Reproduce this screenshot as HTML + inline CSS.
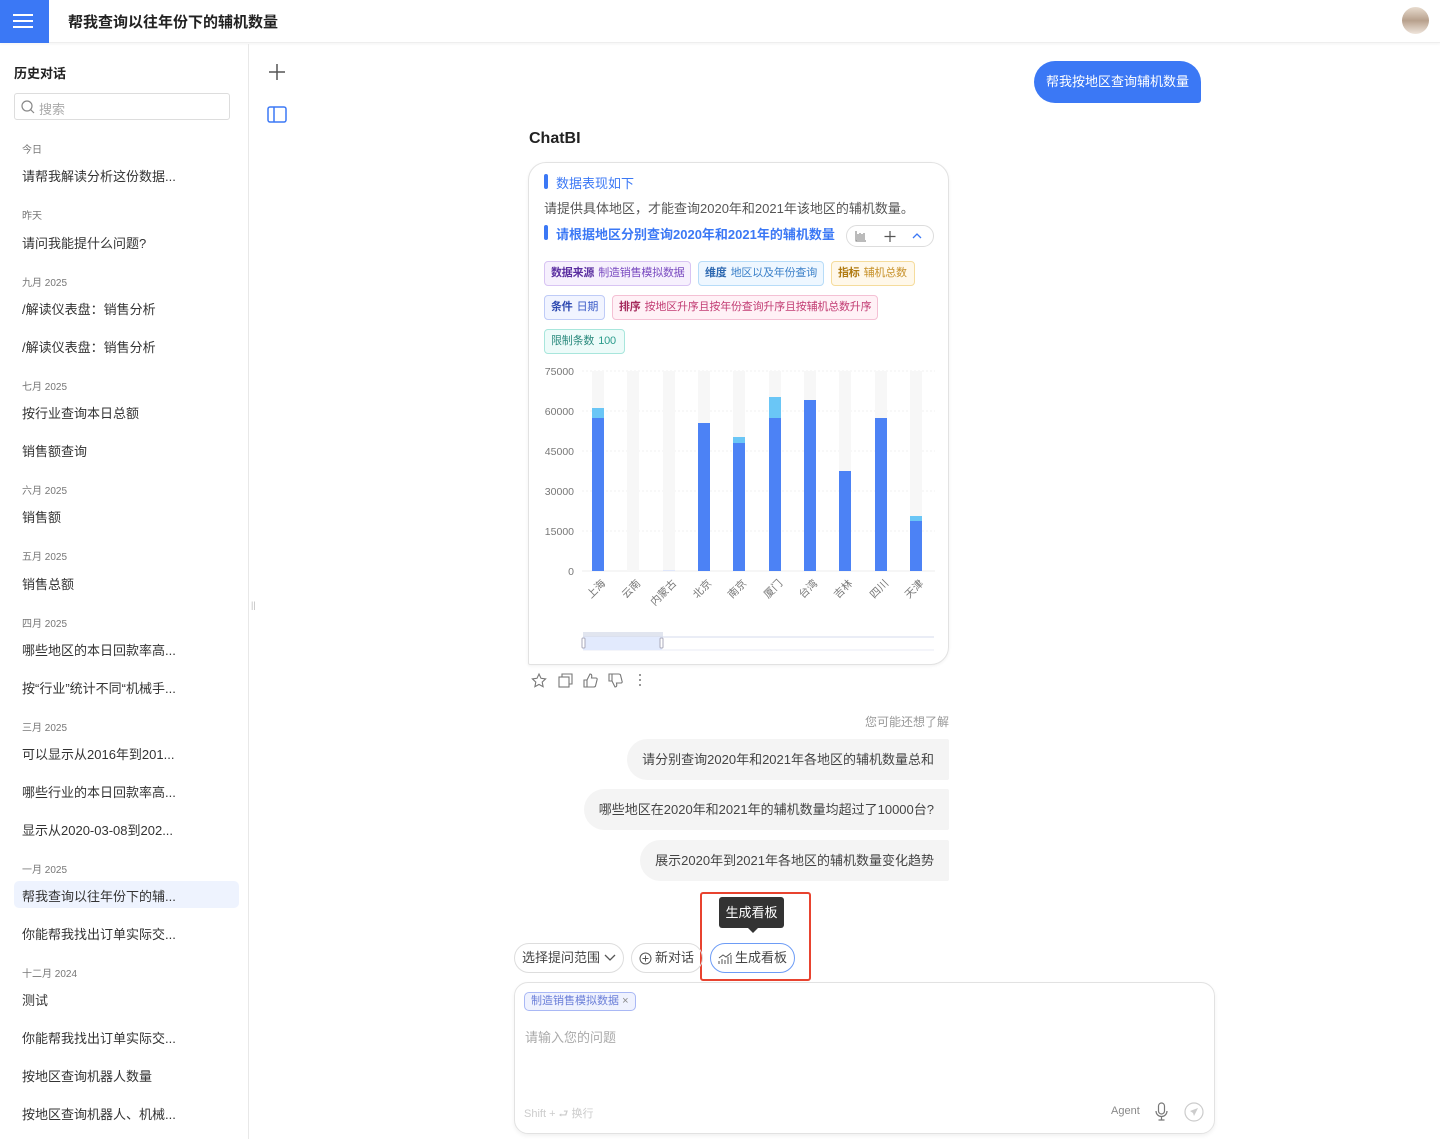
<!DOCTYPE html>
<html><head><meta charset="utf-8"><style>
*{box-sizing:border-box;margin:0;padding:0}
body{width:1440px;height:1139px;position:relative;overflow:hidden;background:#fff;font-family:"Liberation Sans","Noto Sans CJK SC",sans-serif;color:#333}
.a{position:absolute;white-space:nowrap}
.hdr{left:0;top:0;width:1440px;height:43px;border-bottom:1px solid #eee;box-shadow:0 1px 3px rgba(0,0,0,.05)}
.side{left:0;top:44px;width:249px;height:1095px;border-right:1px solid #e8e8e8}
.grp{font-size:10px;color:#777;left:22px}
.it{font-size:13px;color:#333;left:22px}
.tag{position:absolute;height:25px;border-radius:4px;font-size:11px;line-height:23px;padding:0 6px;border:1px solid;white-space:nowrap;letter-spacing:-0.2px}
.tag b{font-weight:600;margin-right:4px}
.sug{position:absolute;right:491px;height:41px;background:#f4f4f4;border-radius:21px 2px 2px 21px;font-size:13px;color:#444;line-height:41px;padding:0 15px;white-space:nowrap}
.btn{position:absolute;top:943px;height:30px;border:1px solid #ddd;border-radius:15px;font-size:13px;line-height:28px;color:#444;padding:0 7px;white-space:nowrap;display:flex;align-items:center;gap:3px}
</style></head><body>
<div class="a hdr"></div>
<div class="a" style="left:0;top:0;width:49px;height:43px;background:#3b78f5"></div>
<div class="a" style="left:13px;top:14px;width:20px;height:2px;background:#fff;box-shadow:0 6px 0 #fff,0 12px 0 #fff"></div>
<div class="a" style="left:68px;top:11px;font-size:15px;font-weight:600;color:#222">帮我查询以往年份下的辅机数量</div>
<div class="a" style="left:1402px;top:7px;width:27px;height:27px;border-radius:50%;background:linear-gradient(180deg,#e8dccf,#b7a08c 50%,#efe5dc)"></div>

<div class="a side"></div>
<div class="a" style="left:14px;top:63px;font-size:13px;font-weight:600;color:#222">历史对话</div>
<div class="a" style="left:14px;top:93px;width:216px;height:27px;border:1px solid #ddd;border-radius:3px"></div>
<svg class="a" style="left:21px;top:100px" width="14" height="14"><circle cx="6" cy="6" r="5" fill="none" stroke="#888" stroke-width="1.2"/><line x1="9.5" y1="9.5" x2="13" y2="13" stroke="#888" stroke-width="1.2"/></svg>
<div class="a" style="left:39px;top:99px;font-size:13px;color:#aaa">搜索</div>
<div class="a" style="left:14px;top:881px;width:225px;height:27px;background:#eef3fe;border-radius:5px"></div>
<div class="a grp" style="top:141px">今日</div>
<div class="a it" style="top:166px">请帮我解读分析这份数据...</div>
<div class="a grp" style="top:207px">昨天</div>
<div class="a it" style="top:233px">请问我能提什么问题?</div>
<div class="a grp" style="top:274px">九月 2025</div>
<div class="a it" style="top:299px">/解读仪表盘：销售分析</div>
<div class="a it" style="top:337px">/解读仪表盘：销售分析</div>
<div class="a grp" style="top:378px">七月 2025</div>
<div class="a it" style="top:403px">按行业查询本日总额</div>
<div class="a it" style="top:441px">销售额查询</div>
<div class="a grp" style="top:482px">六月 2025</div>
<div class="a it" style="top:507px">销售额</div>
<div class="a grp" style="top:548px">五月 2025</div>
<div class="a it" style="top:574px">销售总额</div>
<div class="a grp" style="top:615px">四月 2025</div>
<div class="a it" style="top:640px">哪些地区的本日回款率高...</div>
<div class="a it" style="top:678px">按“行业”统计不同“机械手...</div>
<div class="a grp" style="top:719px">三月 2025</div>
<div class="a it" style="top:744px">可以显示从2016年到201...</div>
<div class="a it" style="top:782px">哪些行业的本日回款率高...</div>
<div class="a it" style="top:820px">显示从2020-03-08到202...</div>
<div class="a grp" style="top:861px">一月 2025</div>
<div class="a it" style="top:886px">帮我查询以往年份下的辅...</div>
<div class="a it" style="top:924px">你能帮我找出订单实际交...</div>
<div class="a grp" style="top:965px">十二月 2024</div>
<div class="a it" style="top:990px">测试</div>
<div class="a it" style="top:1028px">你能帮我找出订单实际交...</div>
<div class="a it" style="top:1066px">按地区查询机器人数量</div>
<div class="a it" style="top:1104px">按地区查询机器人、机械...</div>
<div class="a" style="left:251px;top:600px;font-size:9px;color:#bbb">||</div>

<svg class="a" style="left:268px;top:63px" width="18" height="18"><path d="M9 1v16M1 9h16" stroke="#555" stroke-width="1.5"/></svg>
<svg class="a" style="left:267px;top:106px" width="20" height="18"><rect x="1" y="1" width="18" height="15" rx="2" fill="none" stroke="#3b78f5" stroke-width="1.5"/><line x1="7" y1="1" x2="7" y2="16" stroke="#3b78f5" stroke-width="1.5"/></svg>

<div class="a" style="left:1034px;top:61px;width:167px;height:42px;background:#3b78f5;border-radius:21px 21px 3px 21px;color:#fff;font-size:13px;line-height:42px;text-align:center">帮我按地区查询辅机数量</div>

<div class="a" style="left:529px;top:130px;font-size:16px;font-weight:700;color:#222">ChatBI</div>
<div class="a" style="left:528px;top:162px;width:421px;height:503px;border:1px solid #e2e2e2;border-radius:18px 18px 18px 2px;box-shadow:0 1px 3px rgba(0,0,0,.06)"></div>
<div class="a" style="left:544px;top:174px;width:4px;height:15px;background:#3b78f5;border-radius:2px"></div>
<div class="a" style="left:556px;top:173px;font-size:13px;color:#3b78f5">数据表现如下</div>
<div class="a" style="left:544px;top:198px;font-size:13px;color:#555">请提供具体地区，才能查询2020年和2021年该地区的辅机数量。</div>
<div class="a" style="left:544px;top:225px;width:4px;height:15px;background:#3b78f5;border-radius:2px"></div>
<div class="a" style="left:556px;top:224px;font-size:13px;color:#3b78f5;font-weight:600">请根据地区分别查询2020年和2021年的辅机数量</div>
<div class="a" style="left:846px;top:225px;width:88px;height:22px;border:1px solid #ddd;border-radius:11px"></div>
<svg class="a" style="left:854px;top:230px" width="80" height="12"><path d="M2 1v10h10M4 4v6M6 3v7M8 4v6M10 3v7" stroke="#777" stroke-width="1" fill="none"/><path d="M36 1v11M30.5 6.5h11" stroke="#555" stroke-width="1.2"/><path d="M59 8l4-4 4 4" stroke="#3b78f5" stroke-width="1.3" fill="none"/></svg>

<div class="tag" style="left:544px;top:261px;width:147px;background:#f6f0fd;border-color:#d8c4f3;color:#7a4bc0"><b style="color:#5b2fa0">数据来源</b>制造销售模拟数据</div>
<div class="tag" style="left:698px;top:261px;width:126px;background:#eef7ff;border-color:#b7dcf8;color:#3b80c9"><b style="color:#2d68b0">维度</b>地区以及年份查询</div>
<div class="tag" style="left:831px;top:261px;width:84px;background:#fff8ea;border-color:#f5dc9c;color:#c7912a"><b style="color:#b07a10">指标</b>辅机总数</div>
<div class="tag" style="left:544px;top:295px;width:61px;background:#f1f4ff;border-color:#bfcbf7;color:#3c5cc8"><b style="color:#2c48b0">条件</b>日期</div>
<div class="tag" style="left:612px;top:295px;width:266px;background:#fff1f6;border-color:#f4c0d4;color:#c23c73"><b style="color:#a52a5c">排序</b>按地区升序且按年份查询升序且按辅机总数升序</div>
<div class="tag" style="left:544px;top:329px;width:81px;background:#edfbf9;border-color:#a8e6dc;color:#2b9c8c"><b style="color:#2b8a7d;font-weight:400">限制条数</b>100</div>

<svg class="a" style="left:530px;top:360px" width="410" height="300" font-family="Liberation Sans,Noto Sans CJK SC,sans-serif">
<g font-size="10.5" fill="#777" text-anchor="end">
<text x="44" y="15">75000</text><text x="44" y="55">60000</text><text x="44" y="95">45000</text><text x="44" y="135">30000</text><text x="44" y="175">15000</text><text x="44" y="215">0</text></g>
<g stroke="#f2f2f2" stroke-dasharray="2,2"><line x1="52" y1="11" x2="405" y2="11"/><line x1="52" y1="51" x2="405" y2="51"/><line x1="52" y1="91" x2="405" y2="91"/><line x1="52" y1="131" x2="405" y2="131"/><line x1="52" y1="171" x2="405" y2="171"/></g>
<line x1="52" y1="211" x2="405" y2="211" stroke="#eee"/>
<g fill="#f7f7f7"><rect x="62" y="11" width="12" height="200"/><rect x="97" y="11" width="12" height="200"/><rect x="133" y="11" width="12" height="200"/><rect x="168" y="11" width="12" height="200"/><rect x="203" y="11" width="12" height="200"/><rect x="239" y="11" width="12" height="200"/><rect x="274" y="11" width="12" height="200"/><rect x="309" y="11" width="12" height="200"/><rect x="345" y="11" width="12" height="200"/><rect x="380" y="11" width="12" height="200"/></g>
<g fill="#6ac6f6"><rect x="62" y="48" width="12" height="12"/><rect x="203" y="77" width="12" height="8"/><rect x="239" y="37" width="12" height="22"/><rect x="380" y="156" width="12" height="7"/></g>
<g fill="#4c82f5"><rect x="62" y="58" width="12" height="153"/><rect x="133" y="210" width="12" height="1" fill="#dfe6fa"/><rect x="168" y="63" width="12" height="148"/><rect x="203" y="83" width="12" height="128"/><rect x="239" y="58" width="12" height="153"/><rect x="274" y="40" width="12" height="171"/><rect x="309" y="111" width="12" height="100"/><rect x="345" y="58" width="12" height="153"/><rect x="380" y="161" width="12" height="50"/></g>
<g font-size="10.5" fill="#777" text-anchor="end">
<text transform="translate(76,224) rotate(-45)">上海</text><text transform="translate(111,224) rotate(-45)">云南</text><text transform="translate(147,224) rotate(-45)">内蒙古</text><text transform="translate(182,224) rotate(-45)">北京</text><text transform="translate(217,224) rotate(-45)">南京</text><text transform="translate(253,224) rotate(-45)">厦门</text><text transform="translate(288,224) rotate(-45)">台湾</text><text transform="translate(323,224) rotate(-45)">吉林</text><text transform="translate(359,224) rotate(-45)">四川</text><text transform="translate(394,224) rotate(-45)">天津</text></g>
<rect x="53" y="272" width="80" height="5" fill="#e1e5ef"/>
<line x1="53" y1="277" x2="404" y2="277" stroke="#d5dbee"/>
<line x1="53" y1="290" x2="404" y2="290" stroke="#e8ebf5"/>
<rect x="53" y="277" width="79" height="13" fill="#e2eafd"/>
<rect x="52" y="278" width="3" height="10" rx="1" fill="#fff" stroke="#aab"/><rect x="130" y="278" width="3" height="10" rx="1" fill="#fff" stroke="#aab"/>
</svg>

<svg class="a" style="left:531px;top:672px" width="120" height="18" fill="none" stroke="#777" stroke-width="1.1">
<path d="M8 2l2 4.3 4.6.6-3.4 3.2.9 4.6L8 12.4 3.9 14.7l.9-4.6L1.4 6.9 6 6.3z"/>
<rect x="28" y="5" width="10" height="10"/><path d="M31 5V2h10v10h-3"/>
<path d="M53 8h3v7h-3zM56 8l3-6c2 0 2 2 1.5 4H65c1 0 1.5 1 1 2l-1.5 6c-.3.8-1 1-2 1H56"/>
<path d="M78 2h3v7h-3zM81 9l3 6c2 0 2-2 1.5-4H90c1 0 1.5-1 1-2l-1.5-6c-.3-.8-1-1-2-1H81"/>
<circle cx="109" cy="3" r="1" fill="#777" stroke="none"/><circle cx="109" cy="8" r="1" fill="#777" stroke="none"/><circle cx="109" cy="13" r="1" fill="#777" stroke="none"/></svg>

<div class="a" style="right:491px;top:713px;font-size:12px;color:#999">您可能还想了解</div>
<div class="sug" style="top:739px">请分别查询2020年和2021年各地区的辅机数量总和</div>
<div class="sug" style="top:789px">哪些地区在2020年和2021年的辅机数量均超过了10000台?</div>
<div class="sug" style="top:840px">展示2020年到2021年各地区的辅机数量变化趋势</div>

<div class="a" style="left:700px;top:892px;width:111px;height:89px;border:2px solid #e8432f;border-radius:3px"></div>
<div class="a" style="left:719px;top:897px;width:65px;height:31px;background:#333;border-radius:3px;color:#fff;font-size:13px;line-height:31px;text-align:center">生成看板</div>
<div class="a" style="left:747px;top:927px;width:0;height:0;border-left:6px solid transparent;border-right:6px solid transparent;border-top:6px solid #333"></div>

<div class="btn" style="left:514px;width:110px">选择提问范围<svg width="14" height="10"><path d="M2 2l5 5 5-5" stroke="#555" fill="none" stroke-width="1.3"/></svg></div>
<div class="btn" style="left:631px;width:72px"><svg width="13" height="13"><circle cx="6.5" cy="6.5" r="5.5" fill="none" stroke="#555"/><path d="M6.5 3.5v6M3.5 6.5h6" stroke="#555"/></svg>新对话</div>
<div class="btn" style="left:710px;width:85px;border-color:#6d9cf6"><svg width="14" height="13"><path d="M1 12V9M4 12V7M7 12V8M10 12V5M13 12V3M1 6l4-3 3 2 5-4" stroke="#555" fill="none"/></svg>生成看板</div>

<div class="a" style="left:514px;top:982px;width:701px;height:152px;border:1px solid #e2e2e2;border-radius:14px;box-shadow:0 2px 4px rgba(0,0,0,.06)"></div>
<div class="a" style="left:524px;top:992px;width:112px;height:19px;border:1px solid #a9b8f5;background:#eff2fe;border-radius:5px;font-size:11px;color:#6b7fd8;line-height:17px;padding-left:6px">制造销售模拟数据 <span style="color:#888">×</span></div>
<div class="a" style="left:525px;top:1027px;font-size:13px;color:#aaa">请输入您的问题</div>
<div class="a" style="left:524px;top:1105px;font-size:11px;color:#ccc">Shift + ⮐ 换行</div>
<div class="a" style="left:1111px;top:1105px;font-size:11px;color:#888">Agent</div>
<svg class="a" style="left:1154px;top:1102px" width="15" height="20"><rect x="4.5" y="1" width="6" height="11" rx="3" fill="none" stroke="#777" stroke-width="1.2"/><path d="M2 9a5.5 5.5 0 0011 0M7.5 14.5V18M4.5 18h6" stroke="#777" fill="none" stroke-width="1.2"/></svg>
<svg class="a" style="left:1184px;top:1102px" width="20" height="20"><circle cx="10" cy="10" r="9" fill="none" stroke="#ccc" stroke-width="1.2"/><path d="M14 6l-8 3 3 2 1 3z" fill="#ccc"/></svg>
</body></html>
